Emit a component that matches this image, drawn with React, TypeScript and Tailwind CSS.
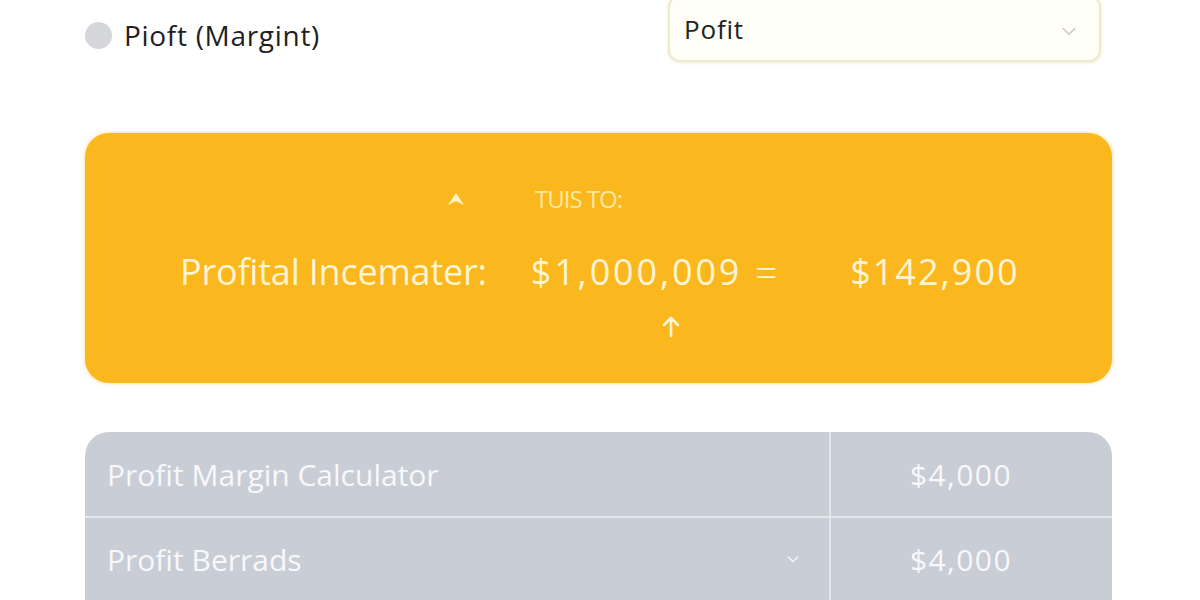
import React from 'react';

function Chevron({ className }: { className?: string }) {
  return (
    <svg viewBox="0 0 24 24" fill="none" stroke="currentColor" strokeWidth="1.6" strokeLinecap="round" strokeLinejoin="round" className={className}>
      <path d="M5 9l7 7 7-7" />
    </svg>
  );
}

const rows = [
  { label: 'Profit Margin Calculator', value: '$4,000', chevron: false },
  { label: 'Profit Berrads', value: '$4,000', chevron: true },
  { label: '', value: '', chevron: false },
];

export default function App() {
  return (
    <div className="w-[1200px] h-[600px] overflow-hidden bg-white font-['Open_Sans',_'Noto_Sans',_sans-serif]">
      <div className="pl-[85px] pr-[88px]">
        {/* Header: toggle label + select */}
        <div className="flex items-start justify-between">
          <div className="flex items-center gap-[12px] mt-[20px]">
            <span className="w-[27px] h-[27px] rounded-full bg-[#d5d6da]" />
            <span className="text-[28px] leading-[30px] text-[#1f1f1f] tracking-[0.7px]">Pioft (Margint)</span>
          </div>
          <div className="-mt-[5px] mr-[11px] w-[433px] h-[67px] rounded-[12px] border-2 border-[#eeeacb] bg-[#fffef8] shadow-[0_1px_3px_rgba(200,190,140,0.35)] flex items-center justify-between pl-[14px] pr-[20px]">
            <span className="text-[26px] text-[#222] tracking-[0.8px] mt-[2px]">Pofit</span>
            <Chevron className="w-[20px] h-[20px] text-[#c4c4c4] mt-[4px]" />
          </div>
        </div>

        {/* Result card */}
        <div className="mt-[71px] h-[250px] rounded-[24px] bg-[#fbb71e] shadow-[0_0_4px_rgba(251,183,30,0.5)] flex flex-col pt-[50px]">
          <div className="flex items-center pl-[361px] h-[32px]">
            <svg viewBox="0 0 20 14" className="w-[20px] h-[14px] text-[#fff3c4]" fill="currentColor">
              <path d="M10 1 L18 13 L10 9 L2 13 Z" />
            </svg>
            <span className="ml-[69px] text-[24px] leading-[32px] text-[#ffe9a0] tracking-[-1px]">TUIS TO:</span>
          </div>
          <div className="flex items-center pl-[95px] mt-[35px] leading-[44px] text-[#fff4d2]">
            <span className="text-[36px] tracking-[-0.2px]">Profital Incemater:</span>
            <span className="ml-[44px] text-[36px] tracking-[2.8px]">$1,000,009</span>
            <span className="ml-[6px] w-[36px] text-center text-[40px] font-light">=</span>
            <span className="ml-[66px] text-[36px] tracking-[2px]">$142,900</span>
          </div>
          <div className="pl-[576px] mt-[20px]">
            <svg viewBox="0 0 20 24" className="w-[20px] h-[24px] text-[#fff6d6]" fill="none" stroke="currentColor" strokeWidth="2.6" strokeLinecap="round" strokeLinejoin="round">
              <path d="M10 22V4M3 11l7-7 7 7" />
            </svg>
          </div>
        </div>

        {/* Summary table */}
        <div className="mt-[49px] rounded-t-[24px] bg-[#c9cdd5] overflow-hidden">
          {rows.map((row, i) => (
            <div key={i} className={`flex h-[84px] ${i > 0 ? 'border-t-2 border-[#e3e6eb]' : ''}`}>
              <div className="w-[744px] flex items-center justify-between pl-[22px] pr-[28px]">
                <span className="text-[30px] text-[#f7f8fa] tracking-[0px]">{row.label}</span>
                {row.chevron && <Chevron className="w-[16px] h-[16px] text-white" />}
              </div>
              <div className="flex-1 border-l-2 border-[#e3e6eb] flex items-center pl-[79px]">
                <span className="text-[30px] text-[#f7f8fa] tracking-[1.4px]">{row.value}</span>
              </div>
            </div>
          ))}
        </div>
      </div>
    </div>
  );
}
